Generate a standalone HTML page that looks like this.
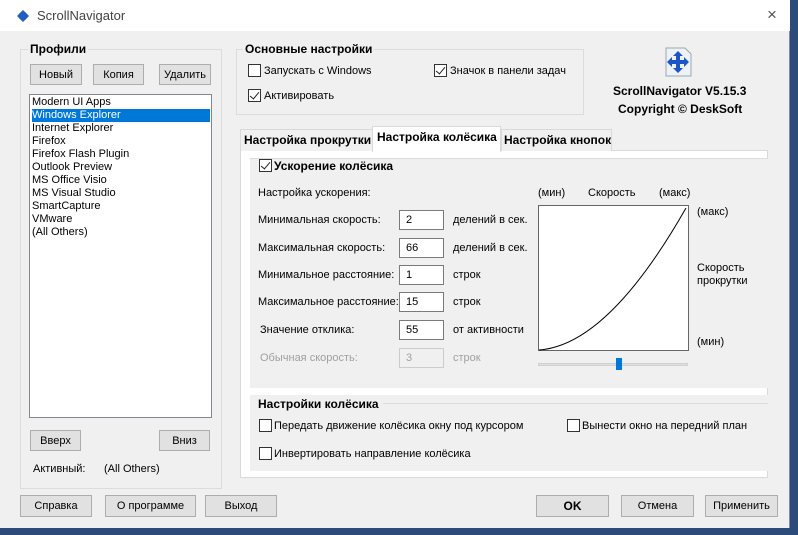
<!DOCTYPE html>
<html><head><meta charset="utf-8"><style>
*{box-sizing:border-box;margin:0;padding:0}
body{width:798px;height:535px;overflow:hidden;background:#2c4a7a;font-family:"Liberation Sans",sans-serif;font-size:11px;color:#000;position:relative}
.a{position:absolute}
.win{left:0;top:0;width:790px;height:528px;background:#f0f0f0;border-right:1px solid #7a8aa8}
.title{left:0;top:0;width:790px;height:31px;background:#fff}
.btn{position:absolute;background:#e1e1e1;border:1px solid #adadad;text-align:center;font-size:11px;display:flex;align-items:center;justify-content:center}
.grp{position:absolute;border:1px solid #dcdcdc}
.cb{position:absolute;width:13px;height:13px;border:1px solid #333;background:#fff}
.cb.on::after{content:"";position:absolute;left:3px;top:0px;width:4px;height:8px;border-right:1.5px solid #222;border-bottom:1.5px solid #222;transform:rotate(40deg)}
.t{position:absolute;white-space:nowrap}
.b{font-weight:bold}
.inp{position:absolute;width:45px;height:20px;background:#fff;border:1px solid #7a7a7a;padding:3px 0 0 6px}
</style></head><body>
<div class="a win"></div>
<div class="a title"></div>
<svg class="a" style="left:16px;top:9px" width="14" height="14" viewBox="0 0 14 14"><path d="M7 1L11 5H9V9H11L7 13L3 9H5V5H3Z" fill="#1f5fbf"/><path d="M1 7L5 3V11ZM13 7L9 3V11Z" fill="#1f5fbf"/></svg>
<div class="t" style="left:37px;top:8px;font-size:13px;color:#444">ScrollNavigator</div>
<div class="t" style="left:767px;top:5px;font-size:17px;color:#555">×</div>

<div class="grp" style="left:20px;top:49px;width:202px;height:440px"></div>
<div class="t b" style="left:28px;top:42px;font-size:12px;background:#f0f0f0;padding:0 2px">Профили</div>
<div class="btn" style="left:30px;top:64px;width:52px;height:21px">Новый</div>
<div class="btn" style="left:93px;top:64px;width:51px;height:21px">Копия</div>
<div class="btn" style="left:159px;top:64px;width:52px;height:21px">Удалить</div>
<div class="a" style="left:29px;top:94px;width:183px;height:324px;background:#fff;border:1px solid #828790"></div>
<div class="a" style="left:32px;top:96px;line-height:13px;font-size:11px">
<div>Modern UI Apps</div><div style="background:#0078d7;color:#fff;width:178px">Windows Explorer</div><div>Internet Explorer</div><div>Firefox</div><div>Firefox Flash Plugin</div><div>Outlook Preview</div><div>MS Office Visio</div><div>MS Visual Studio</div><div>SmartCapture</div><div>VMware</div><div>(All Others)</div></div>
<div class="btn" style="left:30px;top:430px;width:51px;height:21px">Вверх</div>
<div class="btn" style="left:159px;top:430px;width:51px;height:21px">Вниз</div>
<div class="t" style="left:33px;top:463px">Активный:</div>
<div class="t" style="left:104px;top:463px">(All Others)</div>

<div class="grp" style="left:236px;top:49px;width:348px;height:66px"></div>
<div class="t b" style="left:243px;top:42px;font-size:12px;background:#f0f0f0;padding:0 2px">Основные настройки</div>
<div class="cb" style="left:248px;top:64px"></div><div class="t" style="left:264px;top:65px">Запускать с Windows</div>
<div class="cb on" style="left:248px;top:89px"></div><div class="t" style="left:264px;top:90px">Активировать</div>
<div class="cb on" style="left:434px;top:64px"></div><div class="t" style="left:450px;top:65px">Значок в панели задач</div>
<svg class="a" style="left:665px;top:47px" width="28" height="30" viewBox="0 0 28 30"><path d="M1 1H20L26 7V29H1Z" fill="#eef2f8" stroke="#9aa"/><path d="M13 6L18 11H15V15H19V12L24 17L19 22V19H15V23H18L13 28L8 23H11V19H7V22L2 17L7 12V15H11V11H8Z" fill="#1b56c8" transform="translate(0,-2)"/></svg>
<div class="t b" style="left:613px;top:84px;font-size:12px">ScrollNavigator V5.15.3</div>
<div class="t b" style="left:618px;top:102px;font-size:12px">Copyright © DeskSoft</div>

<div class="a" style="left:240px;top:150px;width:528px;height:328px;background:#fff;border:1px solid #d9d9d9"></div>
<div class="a" style="left:240px;top:129px;width:133px;height:22px;border:1px solid #d9d9d9;border-bottom:none;background:#f0f0f0"></div>
<div class="t b" style="left:244px;top:133px;font-size:12px">Настройка прокрутки</div>
<div class="a" style="left:372px;top:126px;width:129px;height:26px;border:1px solid #d9d9d9;border-bottom:none;background:#fff"></div>
<div class="t b" style="left:377px;top:130px;font-size:12px">Настройка колёсика</div>
<div class="a" style="left:501px;top:129px;width:111px;height:22px;border:1px solid #d9d9d9;border-bottom:none;background:#f0f0f0"></div>
<div class="t b" style="left:504px;top:133px;font-size:12px">Настройка кнопок</div>

<div class="a" style="left:250px;top:158px;width:518px;height:230px;background:#f0f0f0;border-top:1px solid #dcdcdc"></div>
<div class="a" style="left:250px;top:395px;width:518px;height:76px;background:#f0f0f0"></div>
<div class="a" style="left:383px;top:403px;width:385px;height:1px;background:#dcdcdc"></div>
<div class="cb on" style="left:259px;top:159px"></div>
<div class="t b" style="left:274px;top:159px;font-size:12px">Ускорение колёсика</div>
<div class="t" style="left:258px;top:187px">Настройка ускорения:</div>
<div class="t" style="left:258px;top:214px">Минимальная скорость:</div>
<div class="t" style="left:258px;top:242px">Максимальная скорость:</div>
<div class="t" style="left:258px;top:269px">Минимальное расстояние:</div>
<div class="t" style="left:258px;top:296px">Максимальное расстояние:</div>
<div class="t" style="left:260px;top:324px">Значение отклика:</div>
<div class="t" style="left:260px;top:352px;color:#a0a0a0">Обычная скорость:</div>
<div class="inp" style="left:399px;top:210px">2</div>
<div class="inp" style="left:399px;top:238px">66</div>
<div class="inp" style="left:399px;top:265px">1</div>
<div class="inp" style="left:399px;top:292px">15</div>
<div class="inp" style="left:399px;top:320px">55</div>
<div class="inp" style="left:399px;top:348px;background:#f0f0f0;border-color:#ccc;color:#a0a0a0">3</div>
<div class="t" style="left:453px;top:214px">делений в сек.</div>
<div class="t" style="left:453px;top:242px">делений в сек.</div>
<div class="t" style="left:453px;top:269px">строк</div>
<div class="t" style="left:453px;top:296px">строк</div>
<div class="t" style="left:453px;top:324px">от активности</div>
<div class="t" style="left:453px;top:352px;color:#a0a0a0">строк</div>

<div class="t" style="left:538px;top:187px">(мин)</div>
<div class="t" style="left:588px;top:187px">Скорость</div>
<div class="t" style="left:659px;top:187px">(макс)</div>
<svg class="a" style="left:538px;top:205px" width="151" height="146"><rect x="0.5" y="0.5" width="150" height="145" fill="#fff" stroke="#666"/><path d="M1 145Q70 140 148 3" fill="none" stroke="#000"/></svg>
<div class="a" style="left:538px;top:363px;width:150px;height:3px;background:#e0e0e0;border:1px solid #d0d0d0"></div>
<div class="a" style="left:616px;top:358px;width:6px;height:12px;background:#0078d7"></div>
<div class="t" style="left:697px;top:206px">(макс)</div>
<div class="t" style="left:697px;top:262px">Скорость</div>
<div class="t" style="left:697px;top:275px">прокрутки</div>
<div class="t" style="left:697px;top:336px">(мин)</div>

<div class="t b" style="left:258px;top:397px;font-size:12px">Настройки колёсика</div>
<div class="cb" style="left:259px;top:419px"></div><div class="t" style="left:274px;top:420px">Передать движение колёсика окну под курсором</div>
<div class="cb" style="left:567px;top:419px"></div><div class="t" style="left:582px;top:420px">Вынести окно на передний план</div>
<div class="cb" style="left:259px;top:447px"></div><div class="t" style="left:274px;top:448px">Инвертировать направление колёсика</div>

<div class="btn" style="left:20px;top:495px;width:72px;height:22px">Справка</div>
<div class="btn" style="left:105px;top:495px;width:91px;height:22px">О программе</div>
<div class="btn" style="left:205px;top:495px;width:72px;height:22px">Выход</div>
<div class="btn b" style="left:536px;top:495px;width:73px;height:22px;font-size:12px">OK</div>
<div class="btn" style="left:621px;top:495px;width:73px;height:22px">Отмена</div>
<div class="btn" style="left:705px;top:495px;width:73px;height:22px">Применить</div>
</body></html>
